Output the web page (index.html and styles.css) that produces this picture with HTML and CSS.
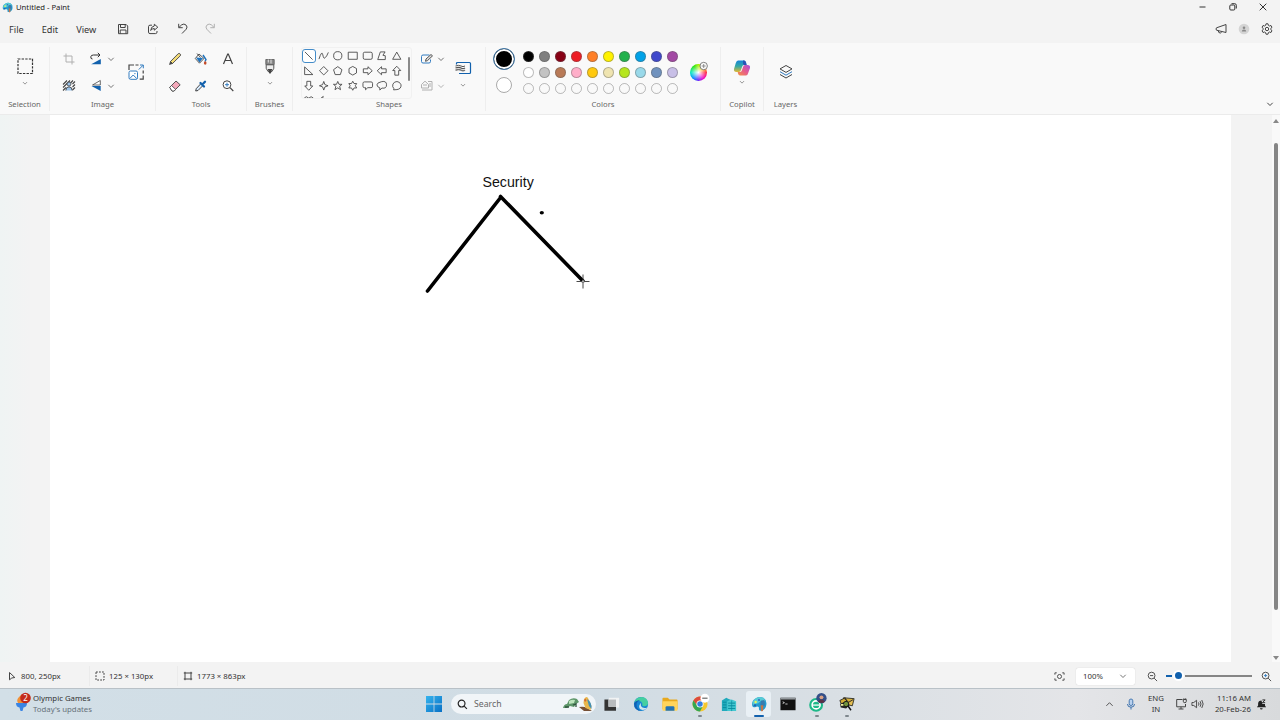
FILE: index.html
```html
<!DOCTYPE html>
<html lang="en">
<head>
  <meta charset="UTF-8">
  <meta name="viewport" content="width=device-width, initial-scale=1.0">
  <title>Untitled - Paint</title>
  <link rel="stylesheet" href="styles.css">
</head>
<body>
  <header class="titlebar">
    <svg class="app-icon" viewBox="0 0 24 24"><use href="#paint-logo"/></svg>
    <span class="title">Untitled - Paint</span>
    <div class="window-buttons">
      <svg viewBox="0 0 10 10"><path d="M1.5 5h6"/></svg>
      <svg viewBox="0 0 10 10"><rect x="1.8" y="3" width="5" height="5" rx="1"/><path d="M3.5 1.7h3.2q1.6 0 1.6 1.6v3.2"/></svg>
      <svg viewBox="0 0 10 10"><path d="M1.7 1.7l6.6 6.6M8.3 1.7L1.7 8.3"/></svg>
    </div>
  </header>

  <nav class="menubar">
    <span class="menu-file">File</span>
    <span class="menu-edit">Edit</span>
    <span class="menu-view">View</span>
    <div class="quick-actions">
      <svg class="line" viewBox="0 0 12 12"><path d="M1.5 1.5h7.7l1.5 1.5v7.7H1.5zM3.5 1.5v3h4.7v-3M3.2 10.7V7h5.8v3.7"/></svg>
      <svg class="line" viewBox="0 0 12 12"><path d="M5 2.2H3Q1.5 2.2 1.5 3.7v5.4q0 1.5 1.5 1.5h5.5q1.5 0 1.5-1.5V8M7.300 1.200l3.500 3-3.500 3V5.500Q5 5.400 3.700 7.500 4 3.400 7.300 3z"/></svg>
      <svg class="line" viewBox="0 0 12 12"><path d="M1.700.8v3.900h4M1.900 4.500l2.800-2.700q2.200-1.500 4.200.1 2.200 2.100.3 4.300L5 10.500"/></svg>
      <svg class="line faded" viewBox="0 0 12 12"><path d="M10.300.8v3.900h-4M10.100 4.500L7.300 1.800Q5.100.3 3.100 1.900q-2.200 2.100-.3 4.300L7 10.500"/></svg>
    </div>
    <div class="account-actions">
      <svg class="line" viewBox="0 0 12 12"><path d="M11 1.500v8L1.500 7.200q-1-1.200 0-2.400zM3.200 7.700q.2 2.600 2.300 2.300 1-.3 1-1.400"/></svg>
      <svg viewBox="0 0 12 12"><circle cx="6" cy="6" r="5.300" fill="#d4d4d4"/><circle cx="6" cy="4.800" r="1.300" fill="#888"/><path d="M3.800 8.500q0-2 2.200-2t2.200 2z" fill="#888"/></svg>
      <svg class="line" viewBox="0 0 12 12"><path d="M5 .8h2l.4 1.600 1 .6 1.600-.5 1 1.800L9.800 5.400v1.200L11 7.700l-1 1.800L8.400 9l-1 .6L7 11.200H5l-.4-1.600-1-.6-1.600.5-1-1.800 1.200-1.100V5.400L1 4.300l1-1.800 1.600.5 1-.6z"/><circle cx="6" cy="6" r="1.700"/></svg>
    </div>
  </nav>

  <section class="ribbon">
    <div class="group group-selection">
      <div class="group-body stacked">
        <svg class="select-icon" viewBox="0 0 18 18"><rect x="2" y="2" width="14.500" height="14.500" fill="none" stroke="#333" stroke-width="1.200" stroke-dasharray="2.400 1.220"/></svg>
        <svg class="chevron small"><use href="#chevron"/></svg>
      </div>
      <span class="group-label">Selection</span>
    </div>

    <div class="group group-image">
      <div class="group-body">
        <div class="image-grid">
          <svg class="tool line faded" viewBox="0 0 16 16"><path d="M5 2.500v8.500h8.500M2.500 5H11v8.500"/></svg>
          <svg class="tool" viewBox="0 0 16 16"><path d="M12.800 8v5.200H3.200z" fill="#1261ad"/><path d="M4.500 8Q2.500 8 2.800 5.800 3 4 5.500 4H12M9.800 1.800L12 4 9.800 6.200" fill="none" stroke="#333"/></svg>
          <svg class="chevron"><use href="#chevron"/></svg>
          <svg class="tool" viewBox="0 0 16 16"><path d="M2 6.500l4-4M2 9.500l7-7M2 12.500l3-3M9.500 5l2.500-2.500M11.500 6L14 3.500M11.500 9l2.500-2.500M11.500 12l2.500-2.500" stroke="#444" stroke-width="1.100"/><circle cx="8" cy="6" r="2" fill="#9bc3ea" stroke="#444" stroke-width=".8"/><path d="M4.800 12.500q0-3.700 3.200-3.700t3.200 3.700" fill="#9bc3ea" stroke="#444" stroke-width=".9"/></svg>
          <svg class="tool" viewBox="0 0 16 16"><path d="M12.700 8v5L3.500 8z" fill="#1261ad"/><path d="M12.300 2.500V7H4.500z" fill="#fff" stroke="#444" stroke-width=".8"/></svg>
          <svg class="chevron"><use href="#chevron"/></svg>
        </div>
        <svg class="resize-icon" viewBox="0 0 18 18"><path d="M2 7V2h5M8.500 2h3M16.200 7.500v3M16.200 12.500v3.700h-3.500" fill="none" stroke="#444" stroke-width="1.200"/><rect x="2" y="8" width="8.500" height="8.300" rx="1.500" fill="#fff" stroke="#337cc0"/><path d="M2.800 15.500l3.400-3.500 3.500 3.500M11.800 6.500l4.200-4.200M13 2h3.300v3.300" fill="none" stroke="#337cc0"/><circle cx="7.900" cy="10.600" r=".7" fill="#337cc0"/></svg>
      </div>
      <span class="group-label">Image</span>
    </div>

    <div class="group group-tools">
      <div class="group-body tools-grid">
        <svg class="tool" viewBox="0 0 16 16"><path d="M3.500 10.500L11.200 2.700q1-.7 1.900.2.900 1 .2 1.900L5.500 12.500z" fill="#f3dc78" stroke="#444" stroke-width=".9"/><path d="M2.500 13.500l1-3 2 2z" fill="#444" stroke="#444" stroke-width=".7"/></svg>
        <svg class="tool" viewBox="0 0 16 16"><path d="M3 6.500l7 .5-3.500 4.500z" fill="#1e73be"/><path d="M6 3l5 4.500-4.500 4.700-4.200-4.700zM4 2.500l3.500 4" fill="none" stroke="#444" stroke-width=".9"/><path d="M10 4l3 4.500-1 2" fill="none" stroke="#1e73be" stroke-width="1.400"/><ellipse cx="12.200" cy="12" rx="1.300" ry="1.700" fill="#c44b28"/></svg>
        <svg class="tool" viewBox="0 0 16 16"><path d="M3.500 13L7.700 3h.6l4.200 10M5 9.500h6" fill="none" stroke="#444" stroke-width="1.200"/></svg>
        <svg class="tool" viewBox="0 0 16 16"><path d="M2.700 9.300L9 3l4.200 3.800-6.200 6.200H5z" fill="#f5aabb" stroke="#444" stroke-width=".9"/><path d="M2.700 9.300L4.500 7.500l4.300 4L7 13H5z" fill="#fff" stroke="#444" stroke-width=".8"/></svg>
        <svg class="tool" viewBox="0 0 16 16"><path d="M8 5.500l2 2-5 5-2.300.5.500-2.300z" fill="#d9ecff" stroke="#333" stroke-width=".9"/><path d="M7.500 5l3.500 3.500M9.300 6.500l2.700-2.700" stroke="#1261ad" stroke-width="2.300" stroke-linecap="round"/></svg>
        <svg class="tool" viewBox="0 0 16 16"><circle cx="7" cy="6.700" r="3.900" fill="#fff" stroke="#444"/><path d="M10 9.700l3.300 3.300" stroke="#444" stroke-width="1.200"/><path d="M5 6.700h4M7 4.700v4" stroke="#337cc0"/></svg>
      </div>
      <span class="group-label">Tools</span>
    </div>

    <div class="group group-brushes">
      <div class="group-body stacked">
        <svg class="brush-icon" viewBox="0 0 12 18"><path d="M1.800 1.500h8.400v5H1.800z" fill="#888" stroke="#555" stroke-width=".8"/><path d="M4.300 1.500v3M7 1.500v4" stroke="#eee" stroke-width=".9"/><path d="M2.200 6.800h7.600v3.500L8 13.500q-2 1-4 0l-1.800-3.200z" fill="#eee" stroke="#555"/><path d="M3.800 11h4.400L6.700 15.500H5.300z" fill="#444"/></svg>
        <svg class="chevron small"><use href="#chevron"/></svg>
      </div>
      <span class="group-label">Brushes</span>
    </div>

    <div class="group group-shapes">
      <div class="group-body">
        <div class="shapes-panel">
          <div class="shapes-grid">
            <span class="shape selected"><svg viewBox="0 0 12 12"><path d="M2 2l8 8"/></svg></span>
            <span class="shape"><svg viewBox="0 0 12 12"><path d="M1 9.500Q4 0 5 5t2.500 3Q9 7 10.800 2.500"/></svg></span>
            <span class="shape"><svg viewBox="0 0 12 12"><circle cx="6" cy="6" r="4.300"/></svg></span>
            <span class="shape"><svg viewBox="0 0 12 12"><path d="M1.300 2.300h9.400v7.400H1.300z"/></svg></span>
            <span class="shape"><svg viewBox="0 0 12 12"><rect x="1.300" y="2.300" width="9.400" height="7.400" rx="1.500"/></svg></span>
            <span class="shape"><svg viewBox="0 0 12 12"><path d="M4.500 2h5L7.200 5.500l2.500.5v4H1.800z"/></svg></span>
            <span class="shape"><svg viewBox="0 0 12 12"><path d="M6 2.200L10.300 9.700H1.700z"/></svg></span>
            <span class="shape"><svg viewBox="0 0 12 12"><path d="M1.700 2v8h8.600z"/></svg></span>
            <span class="shape"><svg viewBox="0 0 12 12"><path d="M6 1.600L10.400 6 6 10.400 1.600 6z"/></svg></span>
            <span class="shape"><svg viewBox="0 0 12 12"><path d="M6 1.700l4.400 3.200L8.700 10H3.300L1.600 4.900z"/></svg></span>
            <span class="shape"><svg viewBox="0 0 12 12"><path d="M6 1.500l3.900 2.200v4.600L6 10.500 2.100 8.300V3.700z"/></svg></span>
            <span class="shape"><svg viewBox="0 0 12 12"><path d="M1.400 4h4.800V1.800L10.700 6l-4.500 4.200V8H1.400z"/></svg></span>
            <span class="shape"><svg viewBox="0 0 12 12"><path d="M10.600 4H5.800V1.800L1.300 6l4.500 4.200V8h4.800z"/></svg></span>
            <span class="shape"><svg viewBox="0 0 12 12"><path d="M4 10.600V5.800H1.800L6 1.300l4.200 4.500H8v4.800z"/></svg></span>
            <span class="shape"><svg viewBox="0 0 12 12"><path d="M4 1.400v4.800H1.800L6 10.700l4.200-4.500H8V1.400z"/></svg></span>
            <span class="shape"><svg viewBox="0 0 12 12"><path d="M6 1.500l1.200 3.300L10.500 6 7.200 7.200 6 10.500 4.800 7.200 1.500 6l3.300-1.200z"/></svg></span>
            <span class="shape"><svg viewBox="0 0 12 12"><path d="M6 1.500l1.300 3h3.200L8 6.600l.9 3.500L6 8.200l-2.900 1.900L4 6.600 1.500 4.500h3.200z"/></svg></span>
            <span class="shape"><svg viewBox="0 0 12 12"><path d="M6 1.300l1.300 2.400h2.800L8.700 6l1.400 2.300H7.300L6 10.700 4.700 8.300H1.900L3.300 6 1.900 3.700h2.800z"/></svg></span>
            <span class="shape"><svg viewBox="0 0 12 12"><path d="M2.500 2h7q1.500 0 1.500 1.500v3Q11 8 9.500 8H6l-2.300 2.200V8H2.500Q1 8 1 6.500v-3Q1 2 2.500 2z"/></svg></span>
            <span class="shape"><svg viewBox="0 0 12 12"><path d="M4 8.200Q1 7.300 1 5t5-3.300T11 5 6.200 8.400L4 10.500z"/></svg></span>
            <span class="shape"><svg viewBox="0 0 12 12"><path d="M3 9Q1 7 2 4.300q1.300-2.700 4.200-2.700T10.500 5q.2 4.500-4.300 5L2.700 10.300z"/></svg></span>
            <span class="shape"><svg viewBox="0 0 12 12"><path d="M6 10.500Q0 6 1.500 3q1.800-2.500 4.500.3Q8.700.5 10.500 3 12 6 6 10.500z"/></svg></span>
            <span class="shape"><svg viewBox="0 0 12 12"><path d="M5.500 1.500L1.500 4.500H4l-.5 1H6l5 4L5 3z"/></svg></span>
          </div>
          <span class="shapes-scroll"></span>
        </div>
        <div class="shape-options">
          <svg class="tool" viewBox="0 0 16 16"><path d="M10.500 4H4Q2.500 4 2.500 5.500v5Q2.500 12 4 12h6q1.500 0 1.500-1.500V8.500" fill="none" stroke="#337cc0"/><path d="M6.500 10.300l.5-2.300 5-4.500 1.500 1.400-5 4.700z" fill="#ddd" stroke="#444" stroke-width=".9"/></svg>
          <svg class="chevron"><use href="#chevron"/></svg>
          <svg class="tool line faded" viewBox="0 0 16 16"><path d="M9 3.500h4v8.500H3M2.500 6.500L6 3.200l3.500 3.300V10h-7zM4 7h4M11 5v4"/></svg>
          <svg class="chevron dim"><use href="#chevron"/></svg>
        </div>
        <div class="stroke-size">
          <svg class="size-icon" viewBox="0 0 18 14"><path d="M2.500 3.500V2.500Q2.500 1.500 3.500 1.500h12Q16.500 1.500 16.500 2.500v9q0 1-1 1H5" fill="none" stroke="#1261ad" stroke-width="1.200"/><path d="M1.500 5q3.500-1.300 5.500 0t4 0" fill="none" stroke="#555" stroke-width="1"/><path d="M1.500 7q3.500-1.300 5.500 0t4 0" fill="none" stroke="#555" stroke-width="1.300"/><path d="M1.500 9.200q3.500-1.300 5.500 0t4 0" fill="none" stroke="#777" stroke-width="1.500"/></svg>
          <svg class="chevron small"><use href="#chevron"/></svg>
        </div>
      </div>
      <span class="group-label">Shapes</span>
    </div>

    <div class="group group-colors">
      <div class="group-body">
        <div class="active-colors">
          <span class="primary-color"></span>
          <span class="secondary-color"></span>
        </div>
        <div class="palette" id="palette"></div>
        <svg class="wheel-icon" viewBox="0 0 20 20">
          <foreignObject x="1" y="3" width="17" height="17"><div class="wheel"></div></foreignObject>
          <circle cx="14.700" cy="5" r="3.700" fill="#fafafa" stroke="#666" stroke-width=".8"/><path d="M12.700 5h4M14.700 3v4" stroke="#777" stroke-width=".8"/>
        </svg>
      </div>
      <span class="group-label">Colors</span>
    </div>

    <div class="group group-copilot">
      <div class="group-body stacked">
        <svg class="copilot-icon" viewBox="0 0 18 18">
          <defs>
            <linearGradient id="cop-a" x1="0" y1="0" x2="0" y2="1"><stop offset="0" stop-color="#1684d8"/><stop offset=".5" stop-color="#35a9a4"/><stop offset="1" stop-color="#e4b832"/></linearGradient>
            <linearGradient id="cop-b" x1="1" y1="0" x2="0" y2="1"><stop offset="0" stop-color="#a750dc"/><stop offset=".5" stop-color="#e75c8c"/><stop offset="1" stop-color="#f49345"/></linearGradient>
          </defs>
          <path d="M5 1.500h6q1.500 0 2 2l.6 2.500H11Q9.500 6 9 8l-1 3q-.6 2-2 2H3.500Q.5 13 1 10L2.800 4q.7-2.500 2.200-2.500z" fill="url(#cop-a)"/>
          <path d="M13 16.500H7q-1.500 0-2-2L4.700 13H7q1.500 0 2-2l1-3q.6-2 2-2h2.500Q17.500 6 17 9l-1.800 5q-.7 2.500-2.200 2.500z" fill="url(#cop-b)"/>
          <path d="M10 1.500h1q1.500 0 2 2l.6 2.500H11l-1-1z" fill="#2853b8"/>
        </svg>
        <svg class="chevron small"><use href="#chevron"/></svg>
      </div>
      <span class="group-label">Copilot</span>
    </div>

    <div class="group group-layers">
      <div class="group-body stacked">
        <svg class="layers-icon" viewBox="0 0 16 16"><path d="M8 1.500l6 3.400-6 3.500-6-3.500z" fill="none" stroke="#444"/><path d="M2 7.700l6 3.500 6-3.500" fill="none" stroke="#337cc0"/><path d="M2 10.500L8 14l6-3.500" fill="none" stroke="#444"/></svg>
      </div>
      <span class="group-label">Layers</span>
    </div>

    <svg class="chevron ribbon-toggle"><use href="#chevron"/></svg>
  </section>

  <main class="workspace">
    <div class="canvas">
      <svg class="drawing" viewBox="0 0 1182 547">
        <path d="M377.500 176L451 82M450.500 81.500L533 166" stroke="#000" stroke-width="3.600" stroke-linecap="round"/>
        <ellipse cx="491.800" cy="97.800" rx="2.100" ry="1.700"/>
        <path d="M526.500 166.500h13M533 159.500v14" stroke="#333" stroke-width=".9"/>
        <circle cx="533" cy="166.500" r="1.200" fill="#aaa"/>
        <text x="432.500" y="72.300">Security</text>
      </svg>
    </div>
    <div class="scrollbar">
      <span class="arrow-up"></span>
      <span class="thumb"></span>
      <span class="arrow-down"></span>
    </div>
  </main>

  <footer class="statusbar">
    <div class="status-item status-pos">
      <svg class="line" viewBox="0 0 10 10"><path d="M2.500 1.500v7.300L4.800 7l3-.5z"/></svg>
      <span>800, 250px</span>
    </div>
    <div class="status-item status-sel">
      <svg class="line" viewBox="0 0 10 10"><rect x="1" y="1" width="8" height="8" stroke-dasharray="1.800 1.200"/></svg>
      <span>125 × 130px</span>
    </div>
    <div class="status-item status-size">
      <svg class="line" viewBox="0 0 10 10"><path d="M2 2h6v6H2zM.8 2H2V.8M9.200 2H8V.8M.8 8H2v1.200M9.200 8H8v1.200"/></svg>
      <span>1773 × 863px</span>
    </div>
    <div class="zoom-controls">
      <svg class="fit-icon line" viewBox="0 0 12 12"><path d="M1 4V2h2M9 2h2v2M1 8v2h2M11 8v2H9"/><circle cx="6" cy="6" r="2.200"/></svg>
      <div class="zoom-select"><span>100%</span><svg class="chevron"><use href="#chevron"/></svg></div>
      <svg class="zoom-icon line" viewBox="0 0 12 12"><circle cx="5" cy="5" r="3.700"/><path d="M7.800 7.800L11 11M3.300 5h3.400"/></svg>
      <div class="slider"><span class="slider-fill"></span><span class="slider-knob"></span><span class="slider-rest"></span></div>
      <svg class="zoom-icon line" viewBox="0 0 12 12"><circle cx="5" cy="5" r="3.700"/><path d="M7.800 7.800L11 11"/><path d="M3.300 5h3.400M5 3.300v3.400" stroke="#337cc0"/></svg>
    </div>
  </footer>

  <div class="taskbar">
    <div class="widget">
      <svg class="widget-icon" viewBox="0 0 18 20"><path d="M4 11Q2 8 5 5l3-3q0 4 4 6l1 3z" fill="#f19035"/><path d="M2 11h11q0 4-3.500 4.500L8.500 19h-2l-1-3.500Q2 15 2 11z" fill="#3a84e4"/><circle cx="11.500" cy="6" r="5.300" fill="#c42b1c"/><text x="11.500" y="8.700">2</text></svg>
      <div class="widget-text"><span>Olympic Games</span><span class="muted">Today's updates</span></div>
    </div>

    <div class="apps">
      <svg class="start-icon" viewBox="0 0 16 16"><path d="M0 0h7.600v7.600H0zM8.400 0H16v7.600H8.400zM0 8.400h7.600V16H0zM8.400 8.400H16V16H8.400z" fill="url(#start-fill)"/><defs><linearGradient id="start-fill" x1="0" y1="0" x2="1" y2="1"><stop offset="0" stop-color="#35b4ee"/><stop offset="1" stop-color="#0870c5"/></linearGradient></defs></svg>
      <div class="search">
        <svg class="search-icon" viewBox="0 0 12 12"><circle cx="5" cy="5" r="3.700"/><path d="M7.800 7.800L10.800 10.800"/></svg>
        <span>Search</span>
        <svg class="search-art" viewBox="0 0 32 16">
          <path d="M1 12q1-4 4-4l2-4q4-3 8-1l2 3-3 2-2 3-4-1-3 2z" fill="#5d9669"/><path d="M7 5q3-2 6-1l-1 3-5 1z" fill="#bde4bd"/><path d="M3 11h4M11 9l3-1v3" stroke="#31543f" stroke-width="1.300" fill="none"/>
          <path d="M17 11q5-1 8 1l5 3h-8z" fill="#775034"/><path d="M22 3q3-4 4.500 0l3 7-1 4-5-2-2-5z" fill="#e8b64b"/><path d="M25 3q5 3 4.500 10L27 10z" fill="#438fb3"/><path d="M22 4l1.500-1.500 1 2-1.500 1.500z" fill="#d46734"/>
        </svg>
      </div>
      <span class="app"><svg viewBox="0 0 18 18"><path d="M5.500 2H17v11H5.500z" fill="#f1f3f4"/><path d="M.5 4H5v8h8.500v4.500H.5z" fill="#343434"/><path d="M5 4h8.500v8H5z" fill="#b9bcbe"/></svg></span>
      <span class="app"><svg viewBox="0 0 18 18"><circle cx="9" cy="9" r="8" fill="#1686d3"/><path d="M1.300 8Q3 1 9.500 1q7 .5 7.500 7 0 3.500-4.500 3.500-2.500 0-2-1.500.6-4-3.500-4.500Q3.500 5 1.300 8z" fill="#45cfa0"/><path d="M1.300 8Q4 4 8 5q-4 1-4 5 0 5 6 7Q1 17 1.300 8z" fill="#1261b5"/><path d="M9.500 7q-2 4 1.200 6 2.500 1.200 5.300-.2-3 4.200-7.300 2.500-4-2.800.8-8.300z" fill="#d3e6ed"/></svg></span>
      <span class="app"><svg viewBox="0 0 18 18"><path d="M.5 3q0-1 1-1h5l2 2h8q1 0 1 1v10H.5z" fill="#e8a91e"/><path d="M.5 6h17v9.500q0 1-1 1h-15q-1 0-1-1z" fill="#ffd45c"/><path d="M4 16.500V13q0-1.500 1.500-1.500h7Q14 11.500 14 13v3.500z" fill="#2273b6"/></svg></span>
      <span class="app running"><svg viewBox="0 0 18 18"><circle cx="9" cy="9" r="8.500" fill="#f5c72e"/><path d="M1.500 5Q4.500.5 9 .5T16 5H9Q6 5 5.200 10z" fill="#dd4b3e"/><path d="M1.500 5q-2 4 .3 8 2.400 4.500 7.200 4.500L12.500 11H6z" fill="#35a753"/><circle cx="9" cy="9" r="4" fill="#fff"/><circle cx="9" cy="9" r="3.100" fill="#347de0"/><circle cx="14.500" cy="2.500" r="5" fill="#fff"/><path d="M11.500 2.500h6" stroke="#777" stroke-width="1.500"/></svg></span>
      <span class="app"><svg viewBox="0 0 18 18"><path d="M1 5l5-3 2 1 5 2v12H1z" fill="#20aabc"/><path d="M7 6l5-2 5 2v11H7z" fill="#45c8d1"/><path d="M2 7h4M2 10h4M2 13h4M8 8h8M8 11h8M8 14h8" stroke="#078b9f" stroke-width="1.100"/><path d="M12 5v12" stroke="#078b9f" stroke-width=".8"/></svg></span>
      <span class="app active"><svg viewBox="0 0 24 24"><use href="#paint-logo"/></svg></span>
      <span class="app"><svg viewBox="0 0 18 18"><path d="M.5 2h17v14H.5z" fill="#111"/><path d="M.5 2h17v2H.5z" fill="#92979b"/><path d="M3 6.500l2 1-2 1M6 9h2.500" fill="none" stroke="#eee" stroke-width=".9"/></svg></span>
      <span class="app running"><svg viewBox="0 0 18 18"><circle cx="8" cy="10" r="7.800" fill="#1eb989"/><circle cx="8" cy="10" r="4.500" fill="none" stroke="#fff" stroke-width="1.800"/><path d="M4.500 10.200H12" stroke="#fff" stroke-width="1.400"/><circle cx="14" cy="2.500" r="5.800" fill="#334f88"/><circle cx="14" cy="1.500" r="2.200" fill="#d8a184"/><path d="M10 6.500q4-5 8 0-4 3-8 0z" fill="#5a3145"/></svg></span>
      <span class="app running"><svg viewBox="0 0 18 18"><path d="M5 2l12 1-2 8-9-2z" fill="#e5bf54" stroke="#292a20"/><path d="M6 3l5 4 5-3M1 5l6-3 2 4-6 4z" fill="#d3ad36" stroke="#222"/><path d="M1 9l7-3 4 4-4 4-6-1z" fill="#222"/><circle cx="8" cy="9" r="3" fill="#71933c" stroke="#111"/><path d="M10 11l3.500 5" stroke="#111" stroke-width="1.600"/><path d="M2 9h3v2H2z" fill="#eff09c"/></svg></span>
    </div>

    <div class="tray">
      <svg class="tray-up line" viewBox="0 0 10 10"><path d="M1.500 6.500L5 3l3.500 3.500"/></svg>
      <svg class="tray-mic" viewBox="0 0 12 12"><rect x="4.200" y="1" width="3.600" height="6.500" rx="1.800" fill="#b9d1ee" stroke="#3b70ad" stroke-width=".9"/><path d="M2.500 6q0 3.200 3.500 3.200T9.500 6M6 9.200v2.300" fill="none" stroke="#3b70ad"/></svg>
      <div class="tray-text lang"><span>ENG</span><span>IN</span></div>
      <svg class="tray-net line" viewBox="0 0 12 12"><path d="M7.500 1.500H1.700v7.300h8.800V6M3.500 11h5M6 8.800V11M8.300 1.500h3v1.800q0 1.400-1.500 1.400T8.300 3.300zM8.900.3v1.200M10.700.3v1.200"/></svg>
      <svg class="tray-vol line" viewBox="0 0 14 12"><path d="M1 4.400h2L6 2v8L3 7.600H1zM8 4.300q1.200 1.700 0 3.400M9.800 3q2 3 0 6M11.600 1.700q3 4.300 0 8.600"/></svg>
      <div class="tray-text clock"><span>11:16 AM</span><span>20-Feb-26</span></div>
      <svg class="tray-bell" viewBox="0 0 12 12"><path d="M1 9l1.300-2V5Q2.500 1.500 6 1.500l1 4h2.800V7L11 9zM4.300 10h3q0 1.500-1.500 1.500T4.300 10z" fill="#222"/><path d="M7 1h3L7 4h3" fill="none" stroke="#222"/></svg>
    </div>
  </div>

  <!-- shared icons -->
  <svg class="sprite">
    <symbol id="chevron" viewBox="0 0 8 8"><path d="M1.300 2.800L4 5.500l2.700-2.700" fill="none" stroke="currentColor" stroke-width=".9"/></symbol>
    <symbol id="paint-logo" viewBox="0 0 24 24">
      <path d="M8 3q5-3 11 0 5 3 4 10-1 8-8 9-4 .5-3-4 0-3-4-2-5 2-6-1Q0 7 8 3z" fill="#229bd0"/>
      <path d="M8 3q5-3 11 0l3 5-7-1-4 4-8 2Q1 6 8 3z" fill="#57cbd5"/>
      <circle cx="7" cy="9" r="1.800" fill="#e8f35d"/><circle cx="12" cy="6" r="1.600" fill="#326bc4"/><circle cx="6" cy="14" r="1.600" fill="#275baf"/>
      <path d="M15 7l5-1 1 8-4 2-3-3z" fill="#397bad"/><path d="M14.500 14h4l-.5 8q-2 2-3 0z" fill="#c47548"/>
    </symbol>
  </svg>

  <script>
    const colors = [
      '#000000', '#7f7f7f', '#880015', '#ed1c24', '#ff7f27', '#fff200', '#22b14c', '#00a2e8', '#3f48cc', '#a349a4',
      '#ffffff', '#c3c3c3', '#b97a57', '#ffaec9', '#ffc90e', '#efe4b0', '#b5e61d', '#99d9ea', '#7092be', '#c8bfe7'
    ];
    const palette = document.getElementById('palette');

    // 10 columns x 3 rows, the last row is for custom colors
    for (let i = 0; i < 30; i++) {
      const swatch = document.createElement('span');
      swatch.className = 'swatch';
      if (colors[i]) swatch.style.backgroundColor = colors[i];
      palette.appendChild(swatch);
    }
  </script>
</body>
</html>
```
FILE: styles.css
```css
* {
  box-sizing: border-box;
}
body {
  margin: 0;
  width: 1280px;
  height: 720px;
  overflow: hidden;
  display: flex;
  flex-direction: column;
  background: #f3f3f3;
  color: #333;
  font-family: "Noto Sans", "Open Sans", sans-serif;
  font-size: 8px;
  line-height: 11px;
}
svg {
  display: block;
  flex-shrink: 0;
  overflow: visible;
}
.sprite {
  width: 0;
  height: 0;
}
.line {
  fill: none;
  stroke: #444;
  stroke-width: 1;
}
.faded {
  stroke: #b0b0b0;
}
.chevron {
  width: 8px;
  height: 8px;
  color: #666;
}
.small {
  width: 6px;
  height: 6px;
}
.dim { color: #aaa; }

/* title and menu */
.titlebar {
  height: 16px;
  display: flex;
  align-items: center;
  padding: 0 12px 2px 2px;
}
.app-icon {
  width: 11px;
  height: 11px;
}
.title {
  margin-left: 3px;
  padding-top: 1px;
  font-size: 7.7px;
  color: #222;
}
.window-buttons {
  margin-left: auto;
  display: flex;
  gap: 20px;
}
.window-buttons svg {
  width: 10px;
  height: 10px;
  fill: none;
  stroke: #333;
}
.menubar {
  height: 27px;
  display: flex;
  align-items: center;
  padding: 0 7px 2px 9px;
  font-size: 9.2px;
}
.menu-file,
.menu-edit,
.menu-view { padding-top: 1px; }
.menu-edit { margin-left: 18px; }
.menu-view { margin-left: 18px; }
.quick-actions {
  display: flex;
  gap: 18px;
  margin-left: 20.500px;
}
.quick-actions svg,
.account-actions svg {
  width: 12px;
  height: 12px;
}
.quick-actions .faded {
  margin-left: -3px;
}
.account-actions {
  margin-left: auto;
  display: flex;
  gap: 11px;
}

/* ribbon */
.ribbon {
  height: 72px;
  display: flex;
  background: #f9f9f9;
  border-bottom: 1px solid #ebebeb;
  flex-shrink: 0;
}
.group {
  display: flex;
  flex-direction: column;
  align-items: center;
  margin: 4px 0 3px;
  border-right: 1px solid #eee;
}
.group-body {
  height: 52px;
  width: 100%;
  display: flex;
}
.stacked {
  flex-direction: column;
  align-items: center;
}
.group-label {
  color: #666;
  font-size: 7.7px;
  white-space: nowrap;
}
.tool {
  width: 16px;
  height: 16px;
}
.group-selection { width: 50px; }
.group-image { width: 106px; }
.group-tools { width: 91px; }
.group-brushes { width: 46px; }
.group-shapes { width: 193px; }
.group-colors { width: 235px; }
.group-copilot { width: 43px; }
.group-layers {
  width: 43px;
  border-right: none;
}
.select-icon {
  width: 18px;
  height: 18px;
  margin: 10px 0 5px;
}
.image-grid {
  display: grid;
  grid-template-columns: 16px 16px 8px;
  grid-template-rows: 16px 16px;
  column-gap: 11px;
  row-gap: 11px;
  padding: 4px 0 0 11px;
  align-items: center;
}
.image-grid .chevron {
  margin-left: -8px;
}
.resize-icon {
  width: 18px;
  height: 18px;
  margin: 16px 0 0 4px;
}
.tools-grid {
  display: grid;
  grid-template-columns: repeat(3, 16px);
  grid-template-rows: 16px 16px;
  gap: 11px 10.700px;
  padding: 4px 0 0 10.500px;
}
.brush-icon {
  width: 12px;
  height: 18px;
  margin: 11px 0 4px;
}
.shapes-panel {
  width: 111px;
  height: 52px;
  margin-left: 7.500px;
  display: flex;
  overflow: hidden;
  border: 1px solid #f1f1f1;
  border-radius: 3px;
}
.shapes-grid {
  display: grid;
  grid-template-columns: repeat(7, 14.670px);
  grid-auto-rows: 14.800px;
  padding-top: .5px;
}
.shape {
  display: flex;
  align-items: center;
  justify-content: center;
}
.shape svg {
  width: 11.500px;
  height: 11.500px;
  fill: none;
  stroke: #444;
  stroke-width: .9;
}
.selected {
  border: 1px solid #448cc9;
  border-radius: 3px;
  background: #fff;
}
.shapes-scroll {
  width: 2px;
  height: 24px;
  margin: 9px 0 0 4px;
  border-radius: 1px;
  background: #8a8a8a;
}
.shape-options {
  display: grid;
  grid-template-columns: 16px 8px;
  grid-template-rows: 16px 16px;
  column-gap: 2px;
  row-gap: 11px;
  padding: 4px 0 0 7.500px;
  align-items: center;
}
.stroke-size {
  display: flex;
  flex-direction: column;
  align-items: center;
  gap: 7px;
  padding: 14px 0 0 9px;
}
.size-icon {
  width: 18px;
  height: 14px;
}

/* colors */
.active-colors {
  width: 22px;
  margin-left: 7px;
  padding-top: 1px;
  display: flex;
  flex-direction: column;
  align-items: center;
  gap: 7px;
}
.primary-color {
  width: 22px;
  height: 22px;
  border: 1px solid #437bab;
  border-radius: 50%;
  background: #000;
  box-shadow: inset 0 0 0 2px #fff;
}
.secondary-color {
  width: 16px;
  height: 16px;
  border: 1px solid #aaa;
  border-radius: 50%;
  background: #fff;
}
.palette {
  display: grid;
  grid-template-columns: repeat(10, 11px);
  grid-template-rows: repeat(3, 11px);
  gap: 5px;
  padding: 3.500px 0 0 7.500px;
}
.swatch {
  border: 1px solid rgba(90, 90, 90, .4);
  border-radius: 50%;
}
.wheel-icon {
  width: 20px;
  height: 20px;
  margin: 14px 0 0 11.500px;
}
.wheel {
  width: 17px;
  height: 17px;
  border-radius: 50%;
  background: radial-gradient(circle, #fff 0, transparent 68%), conic-gradient(#a7ef00, #ffbb00 50deg, #ff2440 90deg, #ef00c5 140deg, #5824ff 185deg, #008dff 225deg, #00e8c0 270deg, #25e300 325deg, #a7ef00);
}
.copilot-icon {
  width: 18px;
  height: 18px;
  margin: 12px 0 2px;
}
.layers-icon {
  width: 16px;
  height: 16px;
  margin-top: 17px;
}
.ribbon-toggle {
  margin: 57px 6px 0 auto;
  color: #333;
}

/* drawing area */
.workspace {
  height: 547px;
  display: flex;
  flex-shrink: 0;
  padding-left: 49.500px;
  background: linear-gradient(90deg, #eff4f3, #f3f3f3 30px);
}
.canvas {
  width: 1181.500px;
  background: #fff;
}
.drawing {
  width: 1182px;
  height: 547px;
}
.drawing text {
  font-family: "Liberation Sans", sans-serif;
  font-size: 14.200px;
  fill: #111;
}
.scrollbar {
  width: 8px;
  margin-left: auto;
  background: #f9f9f9;
  display: flex;
  flex-direction: column;
  align-items: center;
  padding: 4px 0 2px;
}
.arrow-up,
.arrow-down {
  border: 3px solid transparent;
}
.arrow-up {
  border-top: 0;
  border-bottom: 4px solid #888;
}
.thumb {
  width: 4px;
  height: 467px;
  margin-top: 20px;
  border-radius: 2px;
  background: #858585;
}
.arrow-down {
  margin-top: auto;
  border-bottom: 0;
  border-top: 4px solid #888;
}

/* status bar */
.statusbar {
  height: 26px;
  display: flex;
  align-items: center;
  flex-shrink: 0;
  padding-top: 2px;
  font-size: 7.800px;
}
.status-item {
  display: flex;
  align-items: center;
  height: 20px;
  border-right: 1px solid #ebebeb;
}
.status-item svg {
  width: 10px;
  height: 10px;
}
.status-pos {
  width: 90px;
  padding-left: 7px;
  gap: 4px;
}
.status-sel {
  width: 88px;
  padding-left: 5px;
  gap: 4px;
}
.status-size {
  padding-left: 5px;
  gap: 4px;
  border-right: none;
}
.zoom-controls {
  margin-left: auto;
  display: flex;
  align-items: center;
  padding-right: 8px;
}
.fit-icon {
  width: 11px;
  height: 11px;
}
.zoom-select {
  width: 59px;
  height: 17px;
  margin: 0 12px 0 11px;
  padding: 0 8px 0 7px;
  display: flex;
  align-items: center;
  justify-content: space-between;
  background: #fff;
  border-radius: 2px;
  box-shadow: 0 0 1px #bbb;
}
.zoom-icon {
  width: 11px;
  height: 11px;
}
.slider {
  display: flex;
  align-items: center;
  margin: -1px 9px 0 8px;
}
.slider-fill {
  width: 6px;
  height: 2px;
  background: #1261ad;
}
.slider-knob {
  width: 11px;
  height: 11px;
  margin: 0 1px;
  border-radius: 50%;
  border: 2px solid #fff;
  background: #1261ad;
}
.slider-rest {
  width: 67px;
  height: 2px;
  background: #858585;
}

/* taskbar */
.taskbar {
  height: 32px;
  flex-shrink: 0;
  display: grid;
  grid-template-columns: 425.500px 1fr auto;
  align-items: center;
  padding-bottom: 1px;
  background: linear-gradient(90deg, #d2dfe7, #d0dce4 45%, #d9dfe4 65%, #e4e5e8 84%, #d8dadc);
  border-top: 1px solid #b9c1c7;
}
.widget {
  display: flex;
  align-items: center;
  gap: 1px;
  padding-left: 14px;
}
.widget-icon {
  width: 18px;
  height: 20px;
  margin-top: -4px;
}
.widget-icon text {
  font-size: 8px;
  fill: #fff;
  text-anchor: middle;
}
.widget-text {
  display: flex;
  flex-direction: column;
  font-size: 7.800px;
}
.muted { color: #67727a; }
.apps {
  display: flex;
  align-items: center;
}
.start-icon {
  width: 16px;
  height: 16px;
}
.search {
  width: 145px;
  height: 20px;
  margin: 0 1px 0 9.500px;
  padding: 0 2px 0 6px;
  border-radius: 10px;
  background: #f1f5f8;
  display: flex;
  align-items: center;
  font-size: 8.700px;
  color: #666;
}
.search-icon {
  width: 11px;
  height: 11px;
  margin-right: 6px;
  fill: none;
  stroke: #222;
  stroke-width: 1.300;
}
.search-art {
  width: 32px;
  height: 16px;
  margin-left: auto;
}
.app {
  width: 25px;
  height: 26px;
  margin: 0 2.200px;
  display: flex;
  align-items: center;
  justify-content: center;
  position: relative;
  border-radius: 3px;
}
.app svg {
  width: 16px;
  height: 16px;
}
.active {
  background: #e9f0f5;
}
.running::after,
.active::after {
  content: "";
  position: absolute;
  bottom: 0;
  width: 4px;
  height: 2px;
  border-radius: 1px;
  background: #7e878d;
}
.active::after {
  width: 10px;
  background: #1261ad;
}
.tray {
  display: flex;
  align-items: center;
  padding-right: 13px;
}
.tray-up {
  width: 9px;
  height: 9px;
}
.tray-mic {
  width: 12px;
  height: 12px;
  margin-left: 11px;
}
.tray-text {
  display: flex;
  flex-direction: column;
  font-size: 7.800px;
}
.lang {
  align-items: center;
  width: 18px;
  margin-left: 10px;
}
.tray-net {
  width: 12px;
  height: 12px;
  margin-left: 10px;
}
.tray-vol {
  width: 13px;
  height: 12px;
  margin-left: 4px;
}
.clock {
  align-items: flex-end;
  width: 38px;
  margin: 0 5px 0 9px;
}
.tray-bell {
  width: 11px;
  height: 11px;
}
```
